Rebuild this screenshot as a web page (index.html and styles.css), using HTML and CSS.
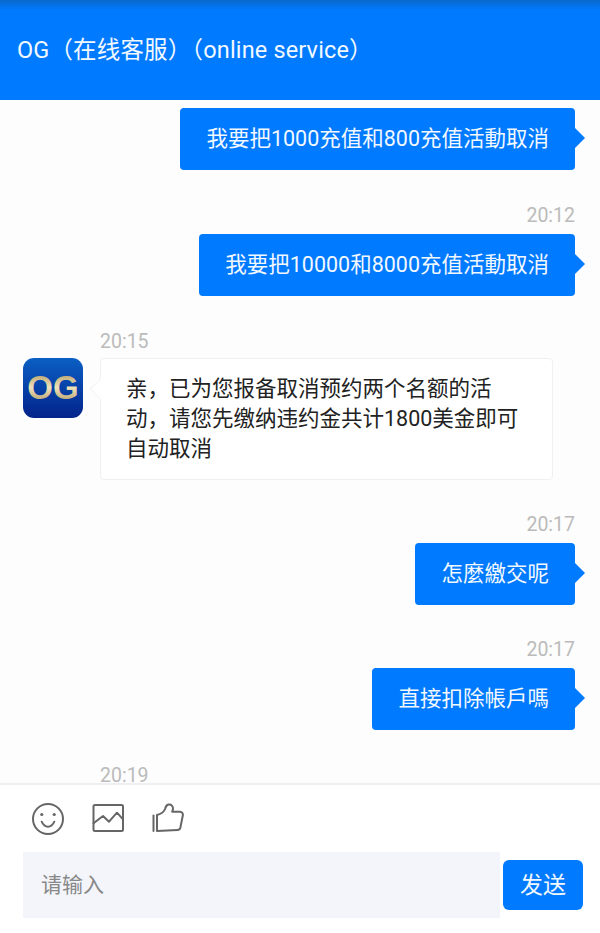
FILE: index.html
```html
<!DOCTYPE html>
<html lang="zh">
<head>
<meta charset="UTF-8" />
<meta name="viewport" content="width=device-width, initial-scale=1" />
<title>OG online service</title>
<link rel="stylesheet" href="styles.css">
</head>
<body>
<div class="page">
  <div class="header">OG（在线客服）（online service）</div>

  <div class="list">
    <div class="msg mine first">
      <div class="bubble">我要把1000充值和800充值活動取消</div>
    </div>
    <div class="msg mine">
      <div class="time">20:12</div>
      <div class="bubble">我要把10000和8000充值活動取消</div>
    </div>
    <div class="msg theirs">
      <div class="time">20:15</div>
      <svg class="avatar" viewBox="0 0 60 60">
        <defs>
          <linearGradient id="avatarBg" x1="0" y1="0" x2="0" y2="1">
            <stop offset="0" stop-color="#0a5fc4" />
            <stop offset="1" stop-color="#03238a" />
          </linearGradient>
          <linearGradient id="avatarGold" x1="0" y1="0" x2="0" y2="1">
            <stop offset="0" stop-color="#a58c55" />
            <stop offset="0.5" stop-color="#efe2ba" />
            <stop offset="1" stop-color="#a88f58" />
          </linearGradient>
        </defs>
        <rect width="60" height="60" rx="11" fill="url(#avatarBg)" />
        <text x="30" y="41" text-anchor="middle" class="avatar-text" fill="url(#avatarGold)">OG</text>
      </svg>
      <div class="bubble">亲，已为您报备取消预约两个名额的活动，请您先缴纳违约金共计1800美金即可自动取消</div>
    </div>
    <div class="msg mine">
      <div class="time">20:17</div>
      <div class="bubble">怎麼繳交呢</div>
    </div>
    <div class="msg mine">
      <div class="time">20:17</div>
      <div class="bubble">直接扣除帳戶嗎</div>
    </div>
    <div class="msg theirs">
      <div class="time">20:19</div>
    </div>
  </div>

  <div class="footer">
    <div class="tools">
      <svg class="tool" viewBox="0 0 32 32">
        <circle cx="16" cy="16" r="15" />
        <circle class="dot" cx="9.8" cy="11.5" r="1.6" />
        <circle class="dot" cx="22.2" cy="11.5" r="1.6" />
        <path d="M9.7 18.7c1.5 3.3 3.7 5 6.3 5s4.800-1.700 6.300-5" />
      </svg>
      <svg class="tool" viewBox="0 0 32 32">
        <rect x="1.500" y="2" width="29.500" height="26" rx="1.500" />
        <path d="M1.500 20.300 11 13l6 5.700 8-9 6 6.600" />
      </svg>
      <svg class="tool" viewBox="0 0 32 32">
        <path d="M1.500 12.500V28" />
        <path d="M5 28V12c4-1 7-3 8-6 .5-2 1-4 3.500-4.500 3-.5 4.500 2 4.500 4 0 1-.3 2-.8 3.200H28c2 0 3.200 1.800 2.800 3.800l-2.400 12c-.4 1.700-1.500 2.500-3 2.500z" />
      </svg>
    </div>
    <div class="entry">
      <input class="input" type="text" placeholder="请输入" />
      <div class="send">发送</div>
    </div>
  </div>
</div>
</body>
</html>
```

FILE: styles.css
```css
* {
  box-sizing: border-box;
}
body {
  margin: 0;
  background: #fdfdfd;
  font-family: Roboto, "Noto Sans CJK SC", sans-serif;
}
.page {
  display: flex;
  flex-direction: column;
  height: 933px;
  overflow: hidden;
}
.header {
  flex: none;
  height: 100px;
  padding: 0 17px 5px;
  display: flex;
  align-items: center;
  background: linear-gradient(#0a69cc, #007aff 10px);
  color: #f2f8ff;
  font-size: 23.500px;
  letter-spacing: .15px;
}

/* messages */
.list {
  flex: 1;
  min-height: 0;
  overflow: hidden;
  padding-top: 8px;
}
.msg {
  position: relative;
  display: flex;
  flex-direction: column;
  margin-top: 34px;
}
.msg.first {
  margin-top: 0;
  margin-bottom: 35px;
}
.mine {
  align-items: flex-end;
  padding-right: 25px;
}
.theirs {
  align-items: flex-start;
  padding-left: 100px;
  padding-right: 47px;
  margin-top: 35px;
}
.time {
  height: 22px;
  margin-bottom: 7px;
  line-height: 22px;
  font-size: 19.500px;
  color: #bbb;
}
.theirs .time {
  margin-bottom: 5px;
}
.bubble {
  position: relative;
  padding: 16px 26px;
  border-radius: 4px;
  font-size: 21.500px;
  line-height: 30px;
}
.bubble::after {
  content: "";
  position: absolute;
}
.mine .bubble {
  background: #007aff;
  color: #f2f8ff;
}
.mine .bubble::after {
  top: 50%;
  right: -10px;
  margin-top: -11px;
  border-left: 10px solid #007aff;
  border-top: 10px solid transparent;
  border-bottom: 10px solid transparent;
}
.theirs .bubble {
  background: #fff;
  border: 1px solid #f0f0f0;
  color: #222;
  padding: 15px 25px;
}
.theirs .bubble::after {
  top: 22px;
  left: -8px;
  width: 15px;
  height: 15px;
  background: #fff;
  border-left: 1px solid #f0f0f0;
  border-bottom: 1px solid #f0f0f0;
  clip-path: polygon(0 0, 0 100%, 100% 100%);
  transform: rotate(45deg);
}
.avatar {
  position: absolute;
  left: 23px;
  top: 27px;
  width: 60px;
  height: 60px;
}
.avatar-text {
  font-family: "Liberation Sans", sans-serif;
  font-size: 33px;
  font-weight: 700;
}

/* input area */
.footer {
  position: relative;
  flex: none;
  height: 150px;
  background: #fff;
  border-top: 2px solid #eeeff2;
}
.tools {
  height: 67px;
  padding: 18px 0 0 32px;
  display: flex;
  gap: 28px;
}
.tool {
  width: 32px;
  height: 32px;
  fill: none;
  stroke: #666;
  stroke-width: 2;
  stroke-linejoin: round;
  stroke-linecap: round;
}
.tool .dot {
  fill: #666;
  stroke: none;
}
.entry {
  display: flex;
  align-items: center;
  padding-left: 23px;
  gap: 3px;
}
.input {
  width: 477px;
  height: 66px;
  padding: 0 18px;
  border: 0;
  outline: 0;
  background: #f3f5fa;
  font-family: inherit;
  font-size: 21px;
}
.input::placeholder {
  color: #888;
  opacity: 1;
}
.send {
  width: 80px;
  height: 50px;
  padding-bottom: 4px;
  display: flex;
  align-items: center;
  justify-content: center;
  background: #007aff;
  border-radius: 6px;
  color: #f2f8ff;
  font-size: 23px;
}
```
